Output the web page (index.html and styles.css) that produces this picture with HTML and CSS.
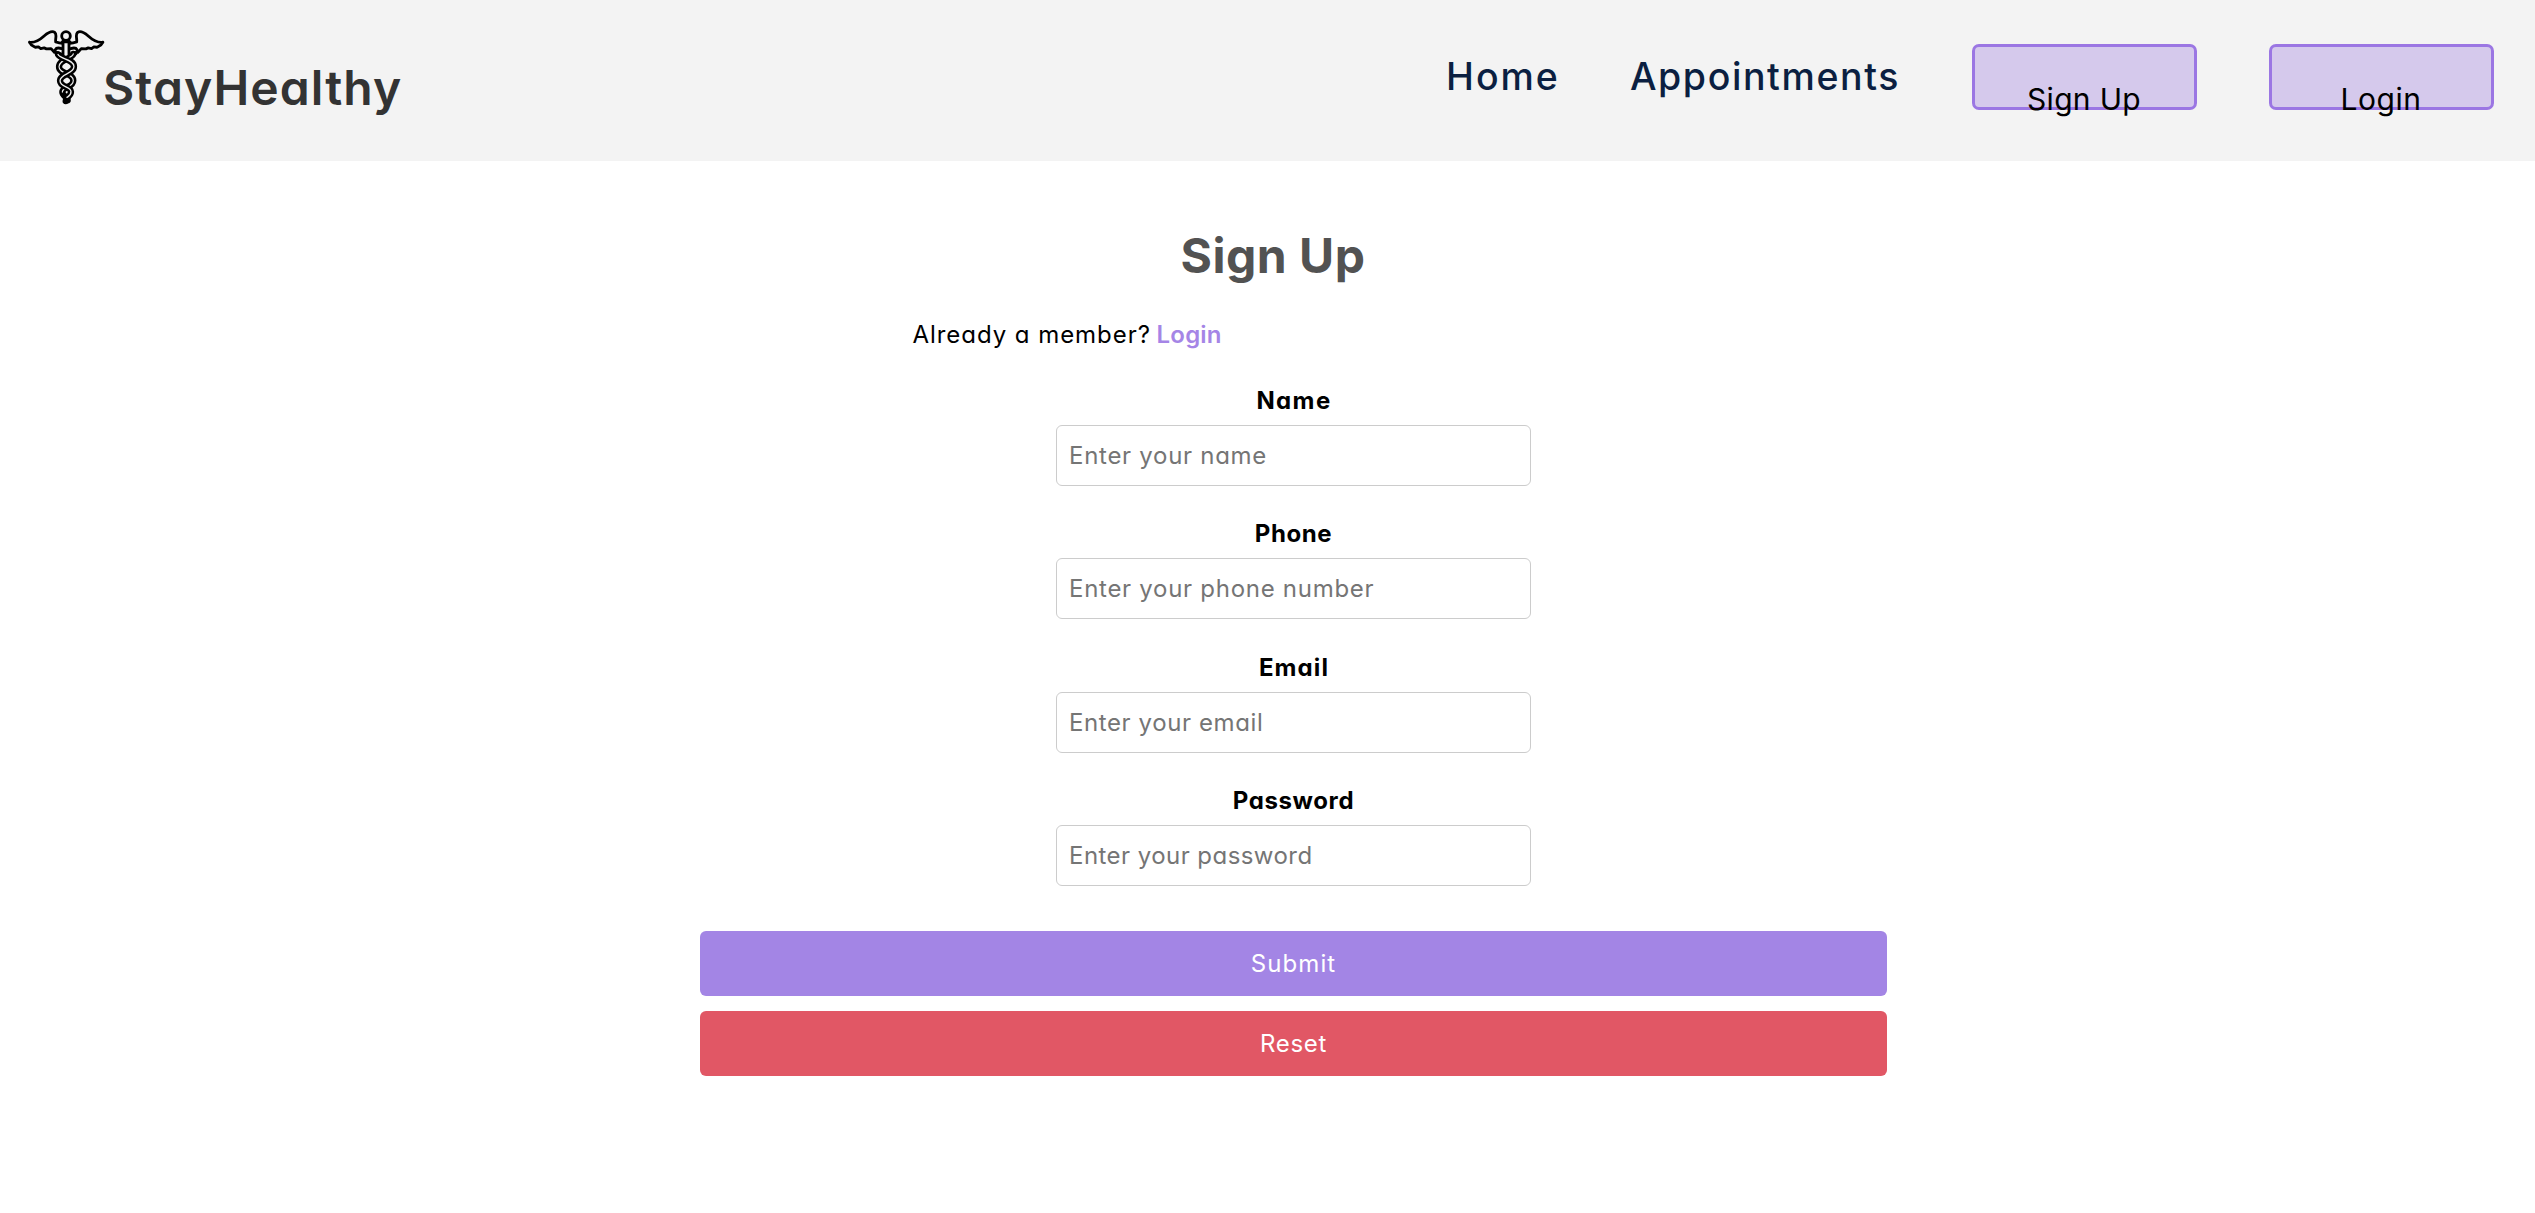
FILE: index.html
```html
<!DOCTYPE html>
<html lang="en">
<head>
<meta charset="utf-8">
<title>StayHealthy - Sign Up</title>
<link rel="stylesheet" href="styles.css">
</head>
<body>
<header class="navbar">
  <a class="brand" href="#">
    <svg class="brand-icon" viewBox="24 29 231 226" aria-hidden="true">
      <g fill="none" stroke="#000" stroke-linecap="round" stroke-linejoin="round" stroke-width="8.5">
        <path d="M28 66C46 68 60 58 72 47C86 35 96 31 104 36C112 43 105 54 107 65Q118 69 127 69M28 66C32 76 39 77 46 81L55 80L62 85L72 83L79 86L93 85L103 96"/>
        <path d="M249 66C231 68 217 58 205 47C191 35 181 31 173 36C165 43 172 54 170 65Q159 69 150 69M249 66C245 76 238 77 231 81L222 80L215 85L205 83L198 86L184 85L174 96"/>
        <circle cx="138" cy="47" r="13"/>
        <path d="M129 62V106M147 62V106M127 65H150"/>
        <path d="M125 85C104 79 99 92 114 105M152 85C173 79 178 92 163 105M113 97L127 103M164 97L150 103"/>
      </g>
      <g fill="none" stroke-linecap="round">
        <path stroke="#000" stroke-width="19" d="M160 101C158 116 117 116 117 140C117 163 160 158 160 181C160 203 127 199 127 216C127 229 143 229 143 241"/>
        <path stroke="#eee" stroke-width="3.5" d="M160 101C158 116 117 116 117 140C117 163 160 158 160 181C160 203 127 199 127 216"/>
        <path stroke="#000" stroke-width="19" d="M114 103C120 117 162 117 162 139C162 162 120 160 120 182C120 202 153 199 153 215C153 229 137 231 137 243"/>
        <path stroke="#eee" stroke-width="4" d="M114 103C120 117 162 117 162 139C162 162 120 160 120 182C120 202 153 199 153 215C153 227 145 229 141 232"/>
      </g>
    </svg>
    <span class="brand-name">StayHealthy</span>
  </a>
  <nav class="nav-links">
    <a class="nav-link home" href="#">Home</a>
    <a class="nav-link" href="#">Appointments</a>
    <a class="nav-btn" href="#">Sign Up</a>
    <a class="nav-btn login" href="#">Login</a>
  </nav>
</header>
<main class="signup">
  <h1 class="title">Sign Up</h1>
  <p class="member">Already a member? <a class="member-link" href="#">Login</a></p>
  <form class="form">
    <div class="field name">
      <label class="label" for="name">Name</label>
      <input class="input" id="name" type="text" placeholder="Enter your name">
    </div>
    <div class="field phone">
      <label class="label" for="phone">Phone</label>
      <input class="input" id="phone" type="tel" placeholder="Enter your phone number">
    </div>
    <div class="field email">
      <label class="label" for="email">Email</label>
      <input class="input" id="email" type="email" placeholder="Enter your email">
    </div>
    <div class="field password">
      <label class="label" for="password">Password</label>
      <input class="input" id="password" type="password" placeholder="Enter your password">
    </div>
    <div class="actions">
      <button class="btn submit" type="button">Submit</button>
      <button class="btn reset" type="reset">Reset</button>
    </div>
  </form>
</main>
</body>
</html>
```
FILE: styles.css
```css
* {
  box-sizing: border-box;
}

body {
  margin: 0;
  background: #fff;
  color: #000;
  font: 24px/36px Inter, "Open Sans", sans-serif;
  font-feature-settings: "cv11";
}

a {
  text-decoration: none;
}

.navbar {
  display: flex;
  justify-content: space-between;
  align-items: flex-start;
  height: 161px;
  padding: 0 41.5px 0 28px;
  background: #f3f3f3;
}

.brand {
  display: flex;
  align-items: flex-start;
  color: #333;
}

.brand-icon {
  width: 77px;
  height: 75px;
  margin-top: 30px;
}

.brand-name {
  margin: 58px 0 0 -2px;
  font-size: 48px;
  font-weight: 600;
  line-height: 60px;
  letter-spacing: 1.1px;
}

.nav-links {
  display: flex;
  align-items: flex-start;
}

.nav-link {
  margin: 49.5px 71.5px 0 0;
  color: #0b1f41;
  font-size: 37.5px;
  font-weight: 500;
  line-height: 54px;
  letter-spacing: 1.6px;
}

.nav-link.home {
  margin-right: 70px;
  letter-spacing: 2px;
}

.nav-btn {
  width: 225px;
  height: 66px;
  margin-top: 44px;
  padding-top: 30px;
  border: 3px solid #9b76e3;
  border-radius: 7px;
  background: #d5c9ec;
  color: #000;
  font-size: 30px;
  line-height: 44px;
  letter-spacing: 0.3px;
  text-align: center;
}

.nav-btn.login {
  margin-left: 72px;
  letter-spacing: 0.5px;
}

.signup {
  display: flex;
  flex-direction: column;
  width: 1187px;
  margin: 65px 0 0 700px;
}

.title {
  width: 1146px;
  margin: 0;
  color: #525252;
  font-size: 48px;
  font-weight: 700;
  line-height: 60px;
  letter-spacing: 0.5px;
  text-align: center;
}

.member {
  margin: 31px 0 0 212.5px;
  letter-spacing: 0.95px;
}

.member-link {
  margin-left: -2px;
  color: #a585e6;
  font-weight: 600;
  letter-spacing: 0.2px;
}

.form {
  display: flex;
  flex-direction: column;
  align-items: center;
  margin-top: 30px;
}

.field {
  display: flex;
  flex-direction: column;
  align-items: center;
  height: 133.4px;
}

.label {
  font-weight: 700;
}

.name .label {
  padding-left: 1px;
  letter-spacing: 1.4px;
}

.phone .label {
  letter-spacing: 0.6px;
}

.email .label {
  padding-left: 1px;
  letter-spacing: 1.1px;
}

.password .label {
  letter-spacing: 0.6px;
}

.input {
  width: 475px;
  height: 61px;
  margin: 6px 0 0;
  padding: 0 12px;
  border: 1px solid #ccc;
  border-radius: 6px;
  background: #fff;
  font: inherit;
  font-feature-settings: inherit;
  letter-spacing: 0.72px;
}

.input::placeholder {
  color: #757575;
  opacity: 1;
}

.email .input {
  letter-spacing: 0.6px;
}

.password .input {
  letter-spacing: 0.45px;
}

.actions {
  display: flex;
  flex-direction: column;
  gap: 15px;
  width: 100%;
  margin-top: 14px;
}

.btn {
  height: 65px;
  padding: 1px 0 0;
  border: 0;
  border-radius: 6px;
  color: #fff;
  font: inherit;
  font-feature-settings: inherit;
}

.submit {
  background: #a385e5;
  letter-spacing: 1.1px;
}

.reset {
  background: #e15765;
  letter-spacing: 0.7px;
}
```
